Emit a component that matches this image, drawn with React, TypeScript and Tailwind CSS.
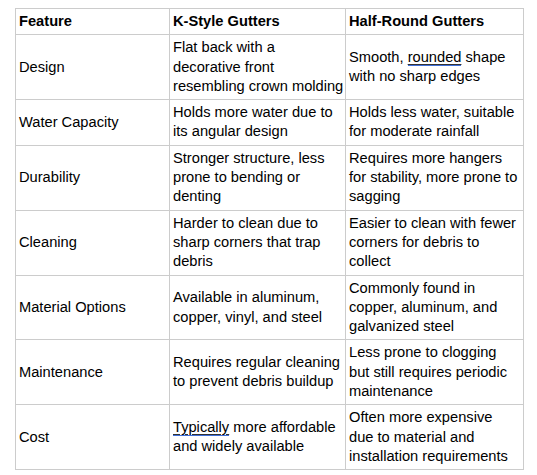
const rows: { feature: string; kStyle: React.ReactNode; halfRound: React.ReactNode }[] = [
  {
    feature: 'Design',
    kStyle: 'Flat back with a decorative front resembling crown molding',
    halfRound: (
      <>
        Smooth, <Marked>rounded</Marked> shape with no sharp edges
      </>
    ),
  },
  {
    feature: 'Water Capacity',
    kStyle: 'Holds more water due to its angular design',
    halfRound: 'Holds less water, suitable for moderate rainfall',
  },
  {
    feature: 'Durability',
    kStyle: 'Stronger structure, less prone to bending or denting',
    halfRound: 'Requires more hangers for stability, more prone to sagging',
  },
  {
    feature: 'Cleaning',
    kStyle: 'Harder to clean due to sharp corners that trap debris',
    halfRound: 'Easier to clean with fewer corners for debris to collect',
  },
  {
    feature: 'Material Options',
    kStyle: 'Available in aluminum, copper, vinyl, and steel',
    halfRound: 'Commonly found in copper, aluminum, and galvanized steel',
  },
  {
    feature: 'Maintenance',
    kStyle: 'Requires regular cleaning to prevent debris buildup',
    halfRound: 'Less prone to clogging but still requires periodic maintenance',
  },
  {
    feature: 'Cost',
    kStyle: (
      <>
        <Marked>Typically</Marked> more affordable and widely available
      </>
    ),
    halfRound: 'Often more expensive due to material and installation requirements',
  },
];

function Marked({ children }: { children: React.ReactNode }) {
  return <span className="underline decoration-[#333] underline-offset-[2px] shadow-[0_1px_0_#3f6fd8]">{children}</span>;
}

const cell = 'border border-[#cccccc] pl-[3px] py-[3px] align-middle';

export default function App() {
  return (
    <div className="min-h-screen bg-white pl-[15px] pt-[8px] text-[14.67px] leading-[19.3px] text-black" style={{ fontFamily: '"Liberation Sans", Arial, sans-serif' }}>
      <table className="w-[509px] table-fixed border-collapse text-left">
        <colgroup>
          <col className="w-[154px]" />
          <col className="w-[176px]" />
          <col className="w-[178px]" />
        </colgroup>
        <thead>
          <tr>
            <th className={`${cell} pr-[1px] py-[3.5px] font-bold`}>Feature</th>
            <th className={`${cell} pr-[1px] py-[3.5px] font-bold`}>K-Style Gutters</th>
            <th className={`${cell} pr-[3px] py-[3.5px] font-bold`}>Half-Round Gutters</th>
          </tr>
        </thead>
        <tbody>
          {rows.map((row) => (
            <tr key={row.feature}>
              <td className={`${cell} pr-[1px]`}>{row.feature}</td>
              <td className={`${cell} pr-[1px]`}>{row.kStyle}</td>
              <td className={`${cell} pr-[3px]`}>{row.halfRound}</td>
            </tr>
          ))}
        </tbody>
      </table>
    </div>
  );
}
